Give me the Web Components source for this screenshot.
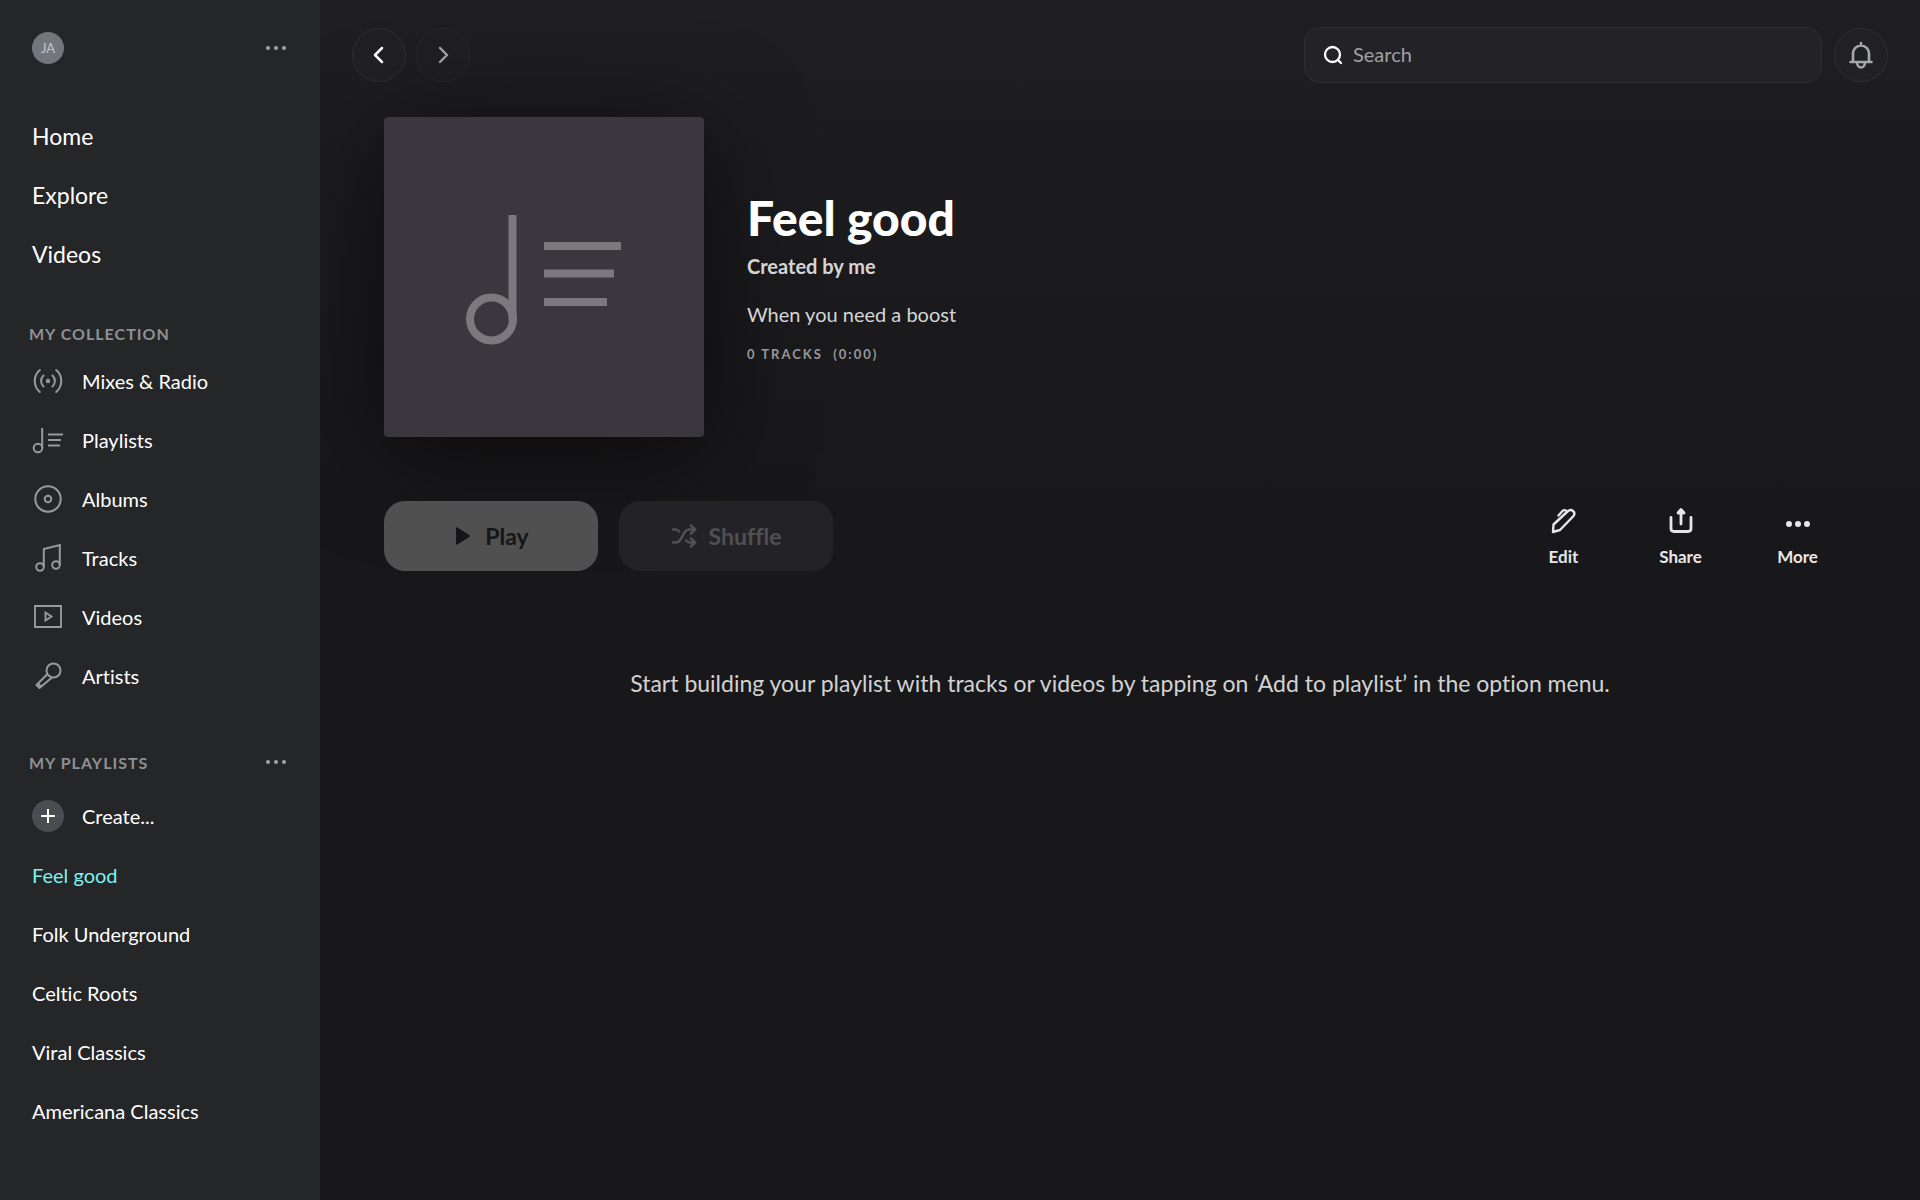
<!DOCTYPE html>
<html lang="en">
<head>
<meta charset="utf-8">
<meta name="viewport" content="width=device-width, initial-scale=1">
<title>Feel good</title>
<style>
  html, body {
    height: 100%;
  }

  body {
    margin: 0;
    background: #18181a;
    color: #fff;
    font-family: Lato, "Liberation Sans", sans-serif;
    font-size: 20px;
    font-variant-ligatures: none;
  }
</style>
</head>
<body>

<music-app></music-app>

<script>
/* ICONS */

const icons = {
  dots: '<svg viewBox="0 0 24 24" width="24" height="24" fill="currentColor"><circle cx="4" cy="12" r="2"/><circle cx="12" cy="12" r="2"/><circle cx="20" cy="12" r="2"/></svg>',
  more: '<svg viewBox="0 0 28 28" width="28" height="28" fill="currentColor"><circle cx="5" cy="17" r="3"/><circle cx="14" cy="17" r="3"/><circle cx="23" cy="17" r="3"/></svg>',
  back: '<svg viewBox="0 0 24 24" width="24" height="24" fill="none" stroke="currentColor" stroke-width="2.5" stroke-linecap="round" stroke-linejoin="round"><path d="M15 5l-7 7 7 7"/></svg>',
  forward: '<svg viewBox="0 0 24 24" width="24" height="24" fill="none" stroke="currentColor" stroke-width="2.4" stroke-linecap="round" stroke-linejoin="round"><path d="M9 5l7 7-7 7"/></svg>',
  search: '<svg viewBox="0 0 20 20" width="20" height="20" fill="none" stroke="currentColor" stroke-width="2.3" stroke-linecap="round"><circle cx="9.5" cy="9.5" r="7.5"/><path d="M15 15l3 3"/></svg>',
  bell: '<svg viewBox="0 0 28 28" width="28" height="28" fill="none" stroke="currentColor" stroke-width="2.6" stroke-linecap="round" stroke-linejoin="round"><path d="M14 2v2M6 21v-8.5a8 8 0 0 1 16 0V21M3.500 21h21M10.200 22a3.800 4.500 0 0 0 7.600 0"/></svg>',
  radio: '<svg viewBox="0 0 32 32" width="32" height="32" fill="none" stroke="currentColor" stroke-width="2" stroke-linecap="round"><circle cx="16" cy="16" r="2.200" fill="currentColor" stroke="none"/><path d="M7.800 5a14.500 14.500 0 0 0 0 22M24.200 5a14.500 14.500 0 0 1 0 22M11.500 10.500a7.500 7.500 0 0 0 0 11M20.500 10.500a7.500 7.500 0 0 1 0 11"/></svg>',
  playlist: '<svg viewBox="0 0 32 32" width="32" height="32" fill="none" stroke="currentColor" stroke-width="2"><circle cx="6" cy="24" r="4.300"/><path d="M10.200 24V4M16 10.500h15M16 16h13M16 21.500h12"/></svg>',
  album: '<svg viewBox="0 0 32 32" width="32" height="32" fill="none" stroke="currentColor" stroke-width="2"><circle cx="16" cy="16" r="12.700"/><circle cx="16" cy="16" r="3.300"/></svg>',
  track: '<svg viewBox="0 0 32 32" width="32" height="32" fill="none" stroke="currentColor" stroke-width="2"><circle cx="8" cy="25" r="3.800"/><circle cx="24" cy="23" r="3.800"/><path d="M11.800 25V7L27.800 3V23"/></svg>',
  video: '<svg viewBox="0 0 32 32" width="32" height="32" fill="none" stroke="currentColor" stroke-width="1.900"><path d="M3 5h26v21H3zM13.500 11.500v8l6-4z"/></svg>',
  artist: '<svg viewBox="0 0 32 32" width="32" height="32" fill="none" stroke="currentColor" stroke-width="2" stroke-linejoin="round"><circle cx="21.500" cy="10.500" r="7"/><path d="M15.500 14L4.500 25l3 3L20 17.500M6 23.500l3 3"/></svg>',
  plus: '<svg viewBox="0 0 32 32" width="32" height="32"><circle cx="16" cy="16" r="16" fill="#4b4d52"/><path d="M9 16h14M16 9v14" stroke="#fff" stroke-width="2"/></svg>',
  play: '<svg viewBox="0 0 20 20" width="20" height="20" fill="currentColor"><path d="M3 2.200q0-1.600 1.400-.8l12 7.700q1.200.9 0 1.800l-12 7.700q-1.400.8-1.400-.8z"/></svg>',
  shuffle: '<svg viewBox="0 0 26 24" width="26" height="24" fill="none" stroke="currentColor" stroke-width="2.600" stroke-linecap="round" stroke-linejoin="round"><path d="M2 5.500h3q1.500 0 3 2M2 18.500h3q2.500 0 4.500-3l4-7q2-3 4.500-3h6M20 1.500l4 4-4 4M15 16.500q1.500 2 4 2h5M20 14.500l4 4-4 4"/></svg>',
  edit: '<svg viewBox="0 0 28 28" width="28" height="28" fill="none" stroke="currentColor" stroke-width="2.400" stroke-linecap="round" stroke-linejoin="round"><path d="M3 25l.500-7.500L17.500 4.500Q20.500 2 23 4t.500 5L10 23zM8.500 8.500l4-4.500q1.500-1.500 3.500-.5"/></svg>',
  share: '<svg viewBox="0 0 28 28" width="28" height="28" fill="none" stroke="currentColor" stroke-width="2.800" stroke-linecap="round" stroke-linejoin="round"><path d="M4 10.500v11q0 3 3 3h14q3 0 3-3v-11M14 17V4M11 6l3-3.500L17 6z"/></svg>',
  cover: '<svg viewBox="0 0 320 320" fill="none" stroke="currentColor" stroke-width="8"><circle cx="107.500" cy="202" r="21.500"/><path d="M128.500 204V98M160 129h77M160 156.500h70M160 185h63"/></svg>'
};

class AppIcon extends HTMLElement {
  connectedCallback() {
    const shadowRoot = this.attachShadow({ mode: 'open' });
    shadowRoot.innerHTML = `
      <style>
        :host { display: block; flex: none; }
        svg { display: block; }
      </style>
      ${icons[this.getAttribute('name')].replace('<svg', '<svg aria-hidden="true"')}
    `;
  }
}
customElements.define('app-icon', AppIcon);

/* Clones a template into an open shadow root */
function defineFromTemplate(name, html) {
  const template = document.createElement('template');
  template.innerHTML = html;

  customElements.define(name, class extends HTMLElement {
    constructor() {
      super();
      this.attachShadow({ mode: 'open' }).appendChild(template.content.cloneNode(true));
    }
  });
}

/* SIDEBAR */

defineFromTemplate('nav-item', `
<style>
  :host {
    display: block;
    font-size: 20px;
    color: #fff;
  }
  :host([large]) { font-size: 23px; }
  :host([active]) { color: #7df3f0; }
  a {
    display: flex;
    align-items: center;
    height: 59px;
    color: inherit;
    text-decoration: none;
  }
  ::slotted(app-icon) {
    margin-right: 18px;
    color: #97999c;
  }
</style>
<a href="#"><slot name="icon"></slot><slot></slot></a>
`);

defineFromTemplate('nav-section', `
<style>
  :host { display: block; }
  header {
    display: flex;
    align-items: center;
    justify-content: space-between;
    height: 32px;
    margin: 0 0 2px -3px;
  }
  h2 {
    margin: 0;
    font-size: 16px;
    font-weight: 700;
    letter-spacing: 1px;
    color: #8e9095;
  }
</style>
<header>
  <h2><slot name="title"></slot></h2>
  <slot name="menu"></slot>
</header>
<nav><slot></slot></nav>
`);

defineFromTemplate('dots-button', `
<style>
  :host { display: block; }
  button {
    display: block;
    padding: 0;
    border: 0;
    background: none;
    color: #a3a4a7;
  }
</style>
<button type="button" aria-label="More options"><app-icon name="dots"></app-icon></button>
`);

defineFromTemplate('side-bar', `
<style>
  :host {
    display: block;
    box-sizing: border-box;
    padding: 32px;
    background: #242628;
  }
  .profile {
    display: flex;
    align-items: center;
    justify-content: space-between;
    margin-bottom: 42px;
  }
  .avatar {
    display: flex;
    align-items: center;
    justify-content: center;
    width: 32px;
    height: 32px;
    padding: 0;
    border: 0;
    border-radius: 50%;
    background: #74767d;
    color: #c4c5c9;
    font-family: inherit;
    font-size: 13px;
  }
  nav-section { margin-top: 34px; }
  .playlists { margin-top: 41px; }
  .create { margin-top: 8px; }
</style>
<div class="profile">
  <button class="avatar" type="button">JA</button>
  <dots-button></dots-button>
</div>
<nav>
  <nav-item large>Home</nav-item>
  <nav-item large>Explore</nav-item>
  <nav-item large>Videos</nav-item>
</nav>
<nav-section>
  <span slot="title">MY COLLECTION</span>
  <nav-item><app-icon slot="icon" name="radio"></app-icon>Mixes &amp; Radio</nav-item>
  <nav-item><app-icon slot="icon" name="playlist"></app-icon>Playlists</nav-item>
  <nav-item><app-icon slot="icon" name="album"></app-icon>Albums</nav-item>
  <nav-item><app-icon slot="icon" name="track"></app-icon>Tracks</nav-item>
  <nav-item><app-icon slot="icon" name="video"></app-icon>Videos</nav-item>
  <nav-item><app-icon slot="icon" name="artist"></app-icon>Artists</nav-item>
</nav-section>
<nav-section class="playlists">
  <span slot="title">MY PLAYLISTS</span>
  <dots-button slot="menu"></dots-button>
  <nav-item class="create"><app-icon slot="icon" name="plus"></app-icon>Create...</nav-item>
  <nav-item active>Feel good</nav-item>
  <nav-item>Folk Underground</nav-item>
  <nav-item>Celtic Roots</nav-item>
  <nav-item>Viral Classics</nav-item>
  <nav-item>Americana Classics</nav-item>
</nav-section>
`);

/* TOP BAR */

defineFromTemplate('search-field', `
<style>
  :host { display: block; }
  label {
    display: flex;
    align-items: center;
    gap: 10px;
    box-sizing: border-box;
    height: 56px;
    padding: 0 18px;
    border: 1px solid #2f2f33;
    border-radius: 16px;
    background: #232327;
  }
  input {
    flex: 1;
    min-width: 0;
    padding: 0 0 2px;
    border: 0;
    outline: 0;
    background: none;
    color: #fff;
    font-family: inherit;
    font-size: 20px;
  }
  input::placeholder { color: #a0a0a3; opacity: 1; }
</style>
<label>
  <app-icon name="search"></app-icon>
  <input type="text" placeholder="Search" aria-label="Search">
</label>
`);

defineFromTemplate('top-bar', `
<style>
  :host {
    display: flex;
    align-items: center;
    padding: 27px 32px 0;
  }
  button {
    display: flex;
    align-items: center;
    justify-content: center;
    width: 54px;
    height: 54px;
    margin-right: 10px;
    padding: 0;
    border: 1px solid #303034;
    border-radius: 50%;
    background: #212125;
    color: #fff;
  }
  button:disabled {
    border-color: #29292c;
    background: #1f1f22;
    color: #a5a5a7;
  }
  search-field {
    flex: 0 1 518px;
    margin-left: auto;
  }
  .bell {
    margin: 0 0 0 12px;
    color: #a4a6aa;
  }
</style>
<button type="button" aria-label="Back"><app-icon name="back"></app-icon></button>
<button type="button" aria-label="Forward" disabled><app-icon name="forward"></app-icon></button>
<search-field></search-field>
<button class="bell" type="button" aria-label="Notifications"><app-icon name="bell"></app-icon></button>
`);

/* PLAYLIST */

defineFromTemplate('playlist-header', `
<style>
  :host {
    display: flex;
    align-items: center;
    gap: 43px;
  }
  .cover {
    flex: none;
    width: 320px;
    height: 320px;
    border-radius: 4px;
    background: #3a383e;
    color: #7a797e;
    box-shadow: 0 16px 100px rgba(0, 0, 0, 0.6);
  }
  h1, p { margin: 0; }
  h1 {
    font-size: 48px;
    line-height: 56px;
    font-weight: 900;
  }
  .author {
    margin-top: 8px;
    font-size: 20px;
    line-height: 24px;
    font-weight: 700;
    color: #d5d5d6;
  }
  .about {
    margin-top: 24px;
    font-size: 20px;
    line-height: 24px;
    color: #d5d5d6;
  }
  .count {
    margin-top: 18px;
    font-size: 13px;
    line-height: 20px;
    font-weight: 700;
    letter-spacing: 2px;
    white-space: pre;
    color: #97979a;
  }
</style>
<div class="cover"><app-icon name="cover"></app-icon></div>
<div>
  <h1><slot></slot></h1>
  <p class="author"><slot name="author"></slot></p>
  <p class="about"><slot name="about"></slot></p>
  <p class="count"><slot name="count"></slot></p>
</div>
`);

defineFromTemplate('big-button', `
<style>
  :host { display: block; }
  button {
    display: flex;
    align-items: center;
    justify-content: center;
    gap: 12px;
    width: 214px;
    height: 70px;
    padding: 0;
    border: 0;
    border-radius: 21px;
    background: #232327;
    color: #505053;
    font-family: inherit;
    font-size: 23px;
    font-weight: 700;
    font-variant-ligatures: none;
  }
  :host([primary]) button {
    background: #505051;
    color: #161618;
  }
</style>
<button type="button" disabled><slot name="icon"></slot><slot></slot></button>
`);

defineFromTemplate('action-button', `
<style>
  :host { display: block; }
  button {
    display: flex;
    flex-direction: column;
    align-items: center;
    gap: 12px;
    width: 117px;
    padding: 2px 0 0;
    border: 0;
    background: none;
    color: #e6e6e7;
    font-family: inherit;
    font-size: 17px;
    line-height: 20px;
    font-weight: 700;
    font-variant-ligatures: none;
  }
</style>
<button type="button"><slot name="icon"></slot><span><slot></slot></span></button>
`);

defineFromTemplate('playlist-page', `
<style>
  :host {
    display: block;
    padding: 34px 64px 64px;
  }
  .controls {
    display: flex;
    align-items: center;
    gap: 21px;
    margin-top: 64px;
  }
  .actions {
    display: flex;
    margin-left: auto;
  }
  .empty {
    margin: 96px 0 0;
    text-align: center;
    font-size: 23px;
    line-height: 32px;
    color: #d2d2d3;
  }
</style>
<playlist-header>
  Feel good
  <span slot="author">Created by me</span>
  <span slot="about">When you need a boost</span>
  <span slot="count">0 TRACKS  (0:00)</span>
</playlist-header>
<div class="controls">
  <big-button primary><app-icon slot="icon" name="play"></app-icon>Play</big-button>
  <big-button><app-icon slot="icon" name="shuffle"></app-icon>Shuffle</big-button>
  <div class="actions">
    <action-button><app-icon slot="icon" name="edit"></app-icon>Edit</action-button>
    <action-button><app-icon slot="icon" name="share"></app-icon>Share</action-button>
    <action-button><app-icon slot="icon" name="more"></app-icon>More</action-button>
  </div>
</div>
<p class="empty">Start building your playlist with tracks or videos by tapping on ‘Add to playlist’ in the option menu.</p>
`);

defineFromTemplate('music-app', `
<style>
  :host {
    display: grid;
    grid-template-columns: 320px 1fr;
    min-height: 100vh;
  }
  main {
    min-width: 0;
    overflow: hidden;
    background: linear-gradient(#1f1f23, #1c1c1e 160px, #18181a 500px);
  }
</style>
<side-bar></side-bar>
<main>
  <top-bar></top-bar>
  <playlist-page></playlist-page>
</main>
`);
</script>
</body>
</html>
